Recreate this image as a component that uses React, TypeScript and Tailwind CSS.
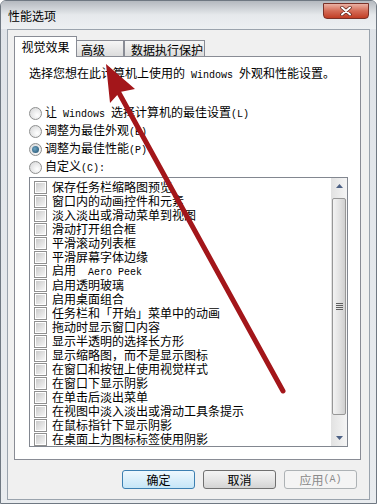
import type { ReactNode } from "react";

const M = ({ children }: { children: ReactNode }) => (
  <span className="whitespace-pre font-['Liberation_Mono',monospace] text-[10px]">{children}</span>
);

const effects: ReactNode[] = [
  "保存任务栏缩略图预览",
  "窗口内的动画控件和元素",
  "淡入淡出或滑动菜单到视图",
  "滑动打开组合框",
  "平滑滚动列表框",
  "平滑屏幕字体边缘",
  <>启用<M>{"  Aero Peek"}</M></>,
  "启用透明玻璃",
  "启用桌面组合",
  "任务栏和「开始」菜单中的动画",
  "拖动时显示窗口内容",
  "显示半透明的选择长方形",
  "显示缩略图，而不是显示图标",
  "在窗口和按钮上使用视觉样式",
  "在窗口下显示阴影",
  "在单击后淡出菜单",
  "在视图中淡入淡出或滑动工具条提示",
  "在鼠标指针下显示阴影",
  "在桌面上为图标标签使用阴影",
];

function Radio({ checked, children }: { checked?: boolean; children: ReactNode }) {
  return (
    <div className="flex h-[18px] items-center">
      <span className="flex h-[13px] w-[13px] items-center justify-center rounded-full border border-[#8e8f8f] bg-[radial-gradient(circle_at_65%_65%,#ffffff,#d2d3d4)]">
        {checked && (
          <span className="h-[7px] w-[7px] rounded-full bg-[radial-gradient(circle_at_40%_40%,#6fa6c4,#1c4a68)]" />
        )}
      </span>
      <span className="ml-[3px] whitespace-nowrap">{children}</span>
    </div>
  );
}

function Check({ children }: { children: ReactNode }) {
  return (
    <div className="flex h-[14px] items-center">
      <span className="flex h-[13px] w-[13px] shrink-0 items-center justify-center border border-[#8f8f8f] bg-white">
        <span className="h-[9px] w-[9px] bg-gradient-to-br from-[#cbcbcb] to-[#f6f6f6]" />
      </span>
      <span className="ml-[5px] whitespace-nowrap">{children}</span>
    </div>
  );
}

function Btn({ children, kind }: { children: ReactNode; kind?: "default" | "disabled" }) {
  const cls =
    kind === "default"
      ? "border-[#3c7fb1] bg-gradient-to-b from-[#eef8fe] to-[#c6e6f7] text-black"
      : kind === "disabled"
      ? "border-[#adb2b5] bg-[#f4f4f4] text-[#8a8a8a]"
      : "border-[#707070] bg-gradient-to-b from-[#f4f4f4] via-[#e6e6e6] to-[#d4d4d4] text-black";
  return (
    <div className={"flex h-[19px] w-[73px] items-center justify-center rounded-[3px] border " + cls}>
      {children}
    </div>
  );
}

export default function App() {
  return (
    <div className="relative h-[504px] w-[377px] overflow-hidden rounded-t-[6px] border border-[#6f7882] bg-gradient-to-b from-[#dfe3e8] to-[#e9ecef] font-['Noto_Sans_CJK_SC',sans-serif] text-[12px] leading-[14px] text-black">
      {/* title bar */}
      <div className="flex h-[28px] items-start justify-between bg-gradient-to-b from-[#b4b9bf] via-[#e6e9ec] to-[#edf0f2] pl-[7px] pr-[7px]">
        <span className="mt-[8px]">性能选项</span>
        <div className="mt-[2px] flex h-[16px] w-[46px] items-center justify-center rounded-b-[4px] border border-[#7a3128] bg-gradient-to-b from-[#eab1a4] via-[#d46a55] to-[#c13d24]">
          <svg width="12" height="10" viewBox="0 0 12 10">
            <path d="M2 1.5 L10 8.5 M10 1.5 L2 8.5" stroke="#5a2219" strokeWidth="3.4" strokeLinecap="round" />
            <path d="M2 1.5 L10 8.5 M10 1.5 L2 8.5" stroke="#ffffff" strokeWidth="2" strokeLinecap="round" />
          </svg>
        </div>
      </div>

      {/* client area */}
      <div className="ml-[6px] h-[471px] w-[363px] border border-[#9aa3ad] bg-[#f0f0f0]">
        <div className="pl-[6px] pt-[6px]">
          <div className="flex h-[20px] items-end">
            <div className="relative z-10 -mb-px flex h-[21px] w-[63px] items-center justify-center border border-b-0 border-[#898c95] bg-white">
              视觉效果
            </div>
            <div className="flex h-[16px] w-[47px] items-center border border-b-0 border-l-0 border-[#898c95] bg-gradient-to-b from-[#f6f6f6] to-[#dcdcdc] pl-[4px] pt-[2px]">
              高级
            </div>
            <div className="flex h-[16px] w-[81px] items-center border border-b-0 border-[#898c95] bg-gradient-to-b from-[#f6f6f6] to-[#dcdcdc] pl-[6px] pt-[2px]">
              数据执行保护
            </div>
          </div>

          {/* tab panel */}
          <div className="h-[404px] w-[347px] border border-[#898c95] bg-white pl-[14px]">
            <div className="mt-[9px] h-[14px] whitespace-nowrap">
              选择您想在此计算机上使用的<M> Windows </M>外观和性能设置。
            </div>
            <div className="mt-[24px]">
              <Radio>
                让<M> Windows </M>选择计算机的最佳设置<M>(L)</M>
              </Radio>
              <Radio>
                调整为最佳外观<M>(B)</M>
              </Radio>
              <Radio checked>
                调整为最佳性能<M>(P)</M>
              </Radio>
              <Radio>
                自定义<M>(C):</M>
              </Radio>
            </div>

            {/* list */}
            <div className="mt-[1px] flex h-[270px] w-[319px] border border-[#828790] bg-white">
              <div className="flex-1 overflow-hidden pl-[4px] pt-[2px]">
                {effects.map((e, i) => (
                  <Check key={i}>{e}</Check>
                ))}
              </div>
              <div className="flex w-[16px] flex-col bg-gradient-to-r from-[#e2e2e2] to-[#f5f5f5]">
                <div className="flex h-[16px] items-center justify-center">
                  <svg width="7" height="4" viewBox="0 0 7 4">
                    <path d="M0 4 L3.5 0 L7 4 Z" fill="#4d6185" />
                  </svg>
                </div>
                <div className="flex flex-1 flex-col px-[1px] pb-[15px] pt-[4px]">
                  <div className="flex flex-1 items-center justify-center rounded-[2px] border border-[#979797] bg-gradient-to-r from-[#f3f3f3] via-[#e4e4e4] to-[#d0d0d0]">
                    <div className="flex flex-col gap-[1px]">
                      <span className="h-px w-[7px] bg-[#5f5f5f]" />
                      <span className="h-px w-[7px] bg-[#5f5f5f]" />
                      <span className="h-px w-[7px] bg-[#5f5f5f]" />
                      <span className="h-px w-[7px] bg-[#5f5f5f]" />
                    </div>
                  </div>
                </div>
                <div className="flex h-[16px] items-center justify-center">
                  <svg width="7" height="4" viewBox="0 0 7 4">
                    <path d="M0 0 L7 0 L3.5 4 Z" fill="#4d6185" />
                  </svg>
                </div>
              </div>
            </div>
          </div>

          {/* buttons */}
          <div className="mt-[10px] flex justify-end gap-[8px] pr-[12px]">
            <Btn kind="default">确定</Btn>
            <Btn>取消</Btn>
            <Btn kind="disabled">
              应用<M>(A)</M>
            </Btn>
          </div>
        </div>
      </div>

      {/* red annotation arrow */}
      <svg className="pointer-events-none absolute left-0 top-0" width="377" height="504" viewBox="0 0 377 504">
        <path d="M118 92 L282 390" stroke="#a3161a" strokeWidth="5" strokeLinecap="round" />
        <path d="M105 63 L109 102 L119 91 L134 88 Z" fill="#a3161a" />
      </svg>
    </div>
  );
}
